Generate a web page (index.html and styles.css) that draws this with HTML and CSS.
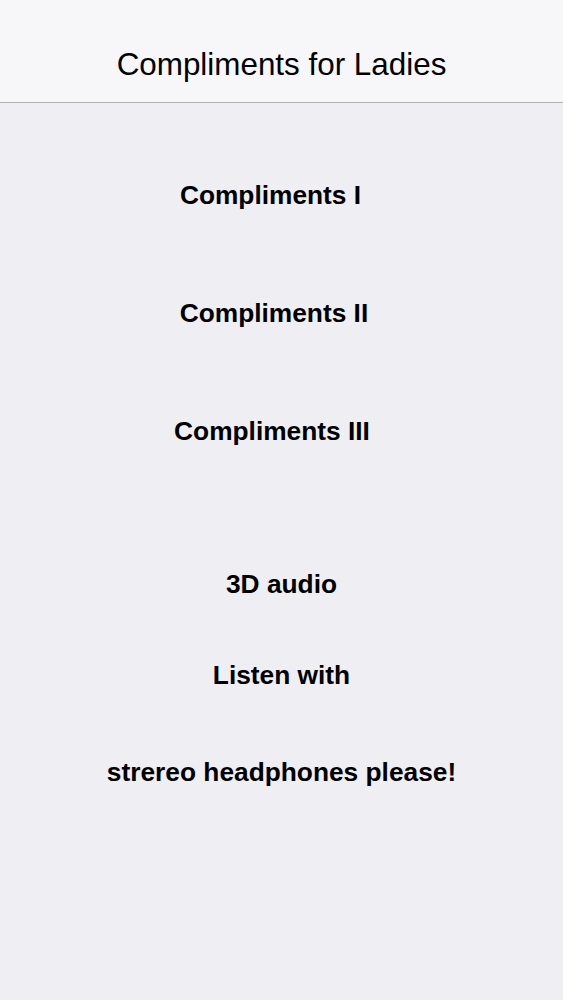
FILE: index.html
```html
<!DOCTYPE html>
<html lang="en">

<head>
    <meta charset="UTF-8">
    <meta name="viewport" content="width=device-width, initial-scale=1.0">
    <title>Compliments for Ladies</title>
    <link rel="stylesheet" href="styles.css">
</head>

<body>

    <div class="navbar">
        <div class="title">Compliments for Ladies</div>
    </div>

    <div class="content">
        <div class="menu">
            <div class="menu-item item-1">Compliments I</div>
            <div class="menu-item item-2">Compliments II</div>
            <div class="menu-item item-3">Compliments III</div>
        </div>
        <div class="note">
            <div class="note-line audio">3D audio</div>
            <div class="note-line listen">Listen with</div>
            <div class="note-line phones">strereo headphones please!</div>
        </div>
    </div>

</body>

</html>
```

FILE: styles.css
```css
* {
    margin: 0;
    padding: 0;
    box-sizing: border-box;
}

body {
    font-family: "Liberation Sans", Arial, sans-serif;
    background-color: #efeef3;
    color: #000;
    width: 563px;
    height: 1000px;
    overflow: hidden;
}

.navbar {
    height: 103px;
    padding-top: 47px;
    background-color: #f7f6f9;
    border-bottom: 1px solid #b2b2b2;
    text-align: center;
}

.title {
    font-size: 31.4px;
    line-height: 36px;
}

.content {
    padding-top: 77px;
}

.menu {
    display: flex;
    flex-direction: column;
    align-items: center;
    gap: 88px;
}

.menu-item,
.note-line {
    font-size: 26.3px;
    font-weight: bold;
    line-height: 30px;
    text-align: center;
    cursor: pointer;
}

.item-1 {
    margin-right: 22px;
}

.item-2 {
    margin-right: 15px;
}

.item-3 {
    margin-right: 19px;
}

.note {
    margin-top: 123px;
    display: flex;
    flex-direction: column;
    align-items: center;
}

.listen {
    margin-top: 61px;
}

.phones {
    margin-top: 67px;
}
```
